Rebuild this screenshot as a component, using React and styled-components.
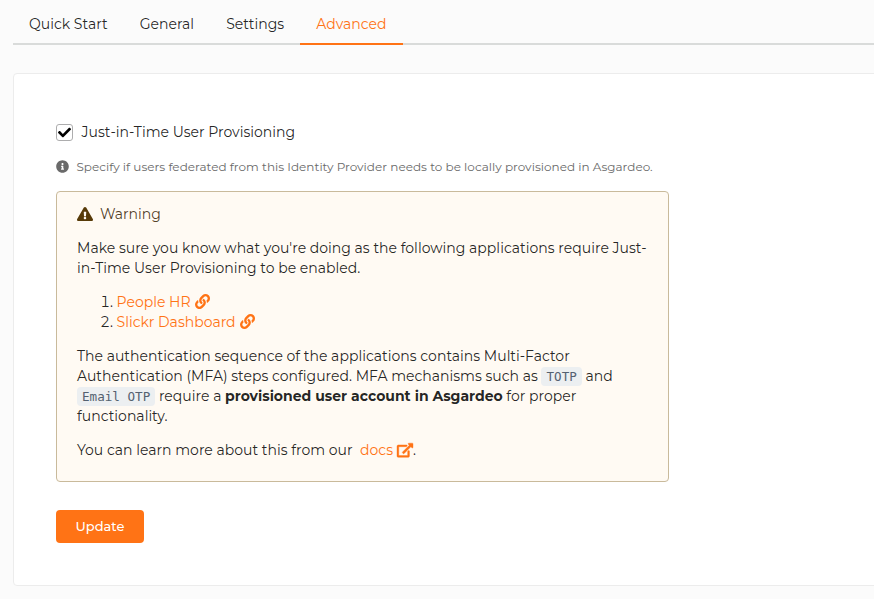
import React from 'react';
import styled, { createGlobalStyle } from 'styled-components';
import { FaCheck, FaExclamationTriangle, FaInfoCircle, FaLink } from 'react-icons/fa';

const GlobalStyle = createGlobalStyle`
  * { box-sizing: border-box; }
  html, body { margin: 0; padding: 0; }
  body {
    background: #fbfbfb;
    color: rgba(0, 0, 0, 0.87);
    font-family: Montserrat, Inter, sans-serif;
    font-size: 14px;
    line-height: 20px;
    overflow: hidden;
  }
`;

const Page = styled.main`
  height: 599px;
  padding-left: 13px;
  display: flex;
  flex-direction: column;
  overflow: hidden;
`;

const TabBar = styled.nav`
  display: flex;
  height: 45px;
  flex: none;
  border-bottom: 2px solid #d9dbda;
`;

const Tab = styled.button`
  height: 45px;
  padding: 5px 16px 0;
  border: 0;
  border-bottom: 2px solid ${p => (p.$active ? '#ff7315' : 'transparent')};
  background: none;
  color: ${p => (p.$active ? '#ff7315' : 'rgba(0, 0, 0, 0.87)')};
  font: inherit;
  line-height: 14px;
  letter-spacing: 0.02px;
  white-space: nowrap;
`;

const Panel = styled.section`
  height: 513px;
  margin-top: 28px;
  margin-right: -6px;
  padding: 48px 42px 0;
  background: #fff;
  border: 1px solid #ececec;
  border-radius: 4px;
`;

const CheckRow = styled.label`
  display: flex;
  align-items: center;
  height: 20px;
`;

const CheckBox = styled.span`
  display: flex;
  align-items: center;
  justify-content: center;
  width: 17px;
  height: 17px;
  margin-right: 8.6px;
  border: 1px solid #adadae;
  border-radius: 3px;
  color: #000;
  font-size: 13px;
`;

const Hint = styled.p`
  display: flex;
  align-items: center;
  gap: 7.4px;
  height: 17px;
  margin: 16px 0;
  color: #6a6a6a;
  font-size: 12px;
  line-height: 17px;
  letter-spacing: 0.02px;
  white-space: nowrap;

  svg { font-size: 13px; }
`;

const WarningBox = styled.div`
  width: 613px;
  height: 291px;
  padding: 12px 20px 0;
  background: #fffaf3;
  border: 1px solid #c9ba9b;
  border-radius: 4px;
`;

const WarningTitle = styled.div`
  display: flex;
  align-items: center;
  gap: 7px;
  margin-bottom: 14px;
  color: #573a08;

  svg { font-size: 16px; }
  span { color: rgba(60, 40, 10, 0.9); }
`;

const Paragraph = styled.p`
  margin: 0 0 14px;
  letter-spacing: 0.01px;

  strong { font-weight: 700; letter-spacing: 0; }
`;

const AppList = styled.ol`
  margin: 0 0 14px;
  padding-left: 39.6px;
`;

const Link = styled.a`
  color: #ff7315;

  svg {
    margin-left: 4px;
    font-size: 15px;
    vertical-align: -2px;
  }
`;

const ExternalIcon = styled.svg`
  width: 16px;
  height: 14.5px;
  fill: currentColor;
  stroke: currentColor;
  stroke-width: 14;
  overflow: visible;
`;

const Code = styled.code`
  padding: 2px 5px;
  border-radius: 4px;
  background: #eceff1;
  color: #546170;
  font: 12.6px/14px 'DejaVu Sans Mono', monospace;
  letter-spacing: 0;
`;

const PrimaryButton = styled.button`
  display: block;
  width: 88px;
  height: 33px;
  margin-top: 28px;
  padding: 0;
  border: 0;
  border-radius: 4px;
  background: #ff7315;
  color: #fff;
  font: 500 13px/13px Montserrat, Inter, sans-serif;
`;

const tabs = ['Quick Start', 'General', 'Settings', 'Advanced'];
const applications = ['People HR', 'Slickr Dashboard'];

export default function App() {
  return (
    <Page>
      <GlobalStyle />
      <TabBar>
        {tabs.map(name => <Tab key={name} $active={name === 'Advanced'}>{name}</Tab>)}
      </TabBar>
      <Panel>
        <CheckRow>
          <CheckBox><FaCheck /></CheckBox>
          Just-in-Time User Provisioning
        </CheckRow>
        <Hint>
          <FaInfoCircle />
          Specify if users federated from this Identity Provider needs to be locally provisioned in Asgardeo.
        </Hint>
        <WarningBox>
          <WarningTitle><FaExclamationTriangle /><span>Warning</span></WarningTitle>
          <Paragraph>
            Make sure you know what you're doing as the following applications require Just-in-Time User
            Provisioning to be enabled.
          </Paragraph>
          <AppList>
            {applications.map(name => <li key={name}><Link>{name}<FaLink /></Link></li>)}
          </AppList>
          <Paragraph>
            The authentication sequence of the applications contains Multi-Factor Authentication (MFA) steps
            configured. MFA mechanisms such as <Code>TOTP</Code> and <Code>Email OTP</Code> require
            a <strong>provisioned user account in Asgardeo</strong> for proper functionality.
          </Paragraph>
          <Paragraph>
            You can learn more about this from our&nbsp;{' '}
            <Link>
              docs
              <ExternalIcon viewBox="0 0 576 512">
                <path d="M576 24v127.984c0 21.461-25.96 31.98-40.971 16.971l-35.707-35.709-243.523 243.523c-9.373 9.373-24.568 9.373-33.941 0l-22.627-22.627c-9.373-9.373-9.373-24.569 0-33.941L442.756 76.676l-35.703-35.705C391.982 25.9 402.656 0 424.024 0H552c13.255 0 24 10.745 24 24zM407.029 270.794l-16 16A23.999 23.999 0 0 0 384 303.765V448H64V128h264a24.003 24.003 0 0 0 16.97-7.029l16-16C376.089 89.851 365.381 64 344 64H48C21.49 64 0 85.49 0 112v352c0 26.51 21.49 48 48 48h352c26.51 0 48-21.49 48-48V287.764c0-21.382-25.852-32.09-40.971-16.97z" />
              </ExternalIcon>
            </Link>.
          </Paragraph>
        </WarningBox>
        <PrimaryButton>Update</PrimaryButton>
      </Panel>
    </Page>
  );
}
